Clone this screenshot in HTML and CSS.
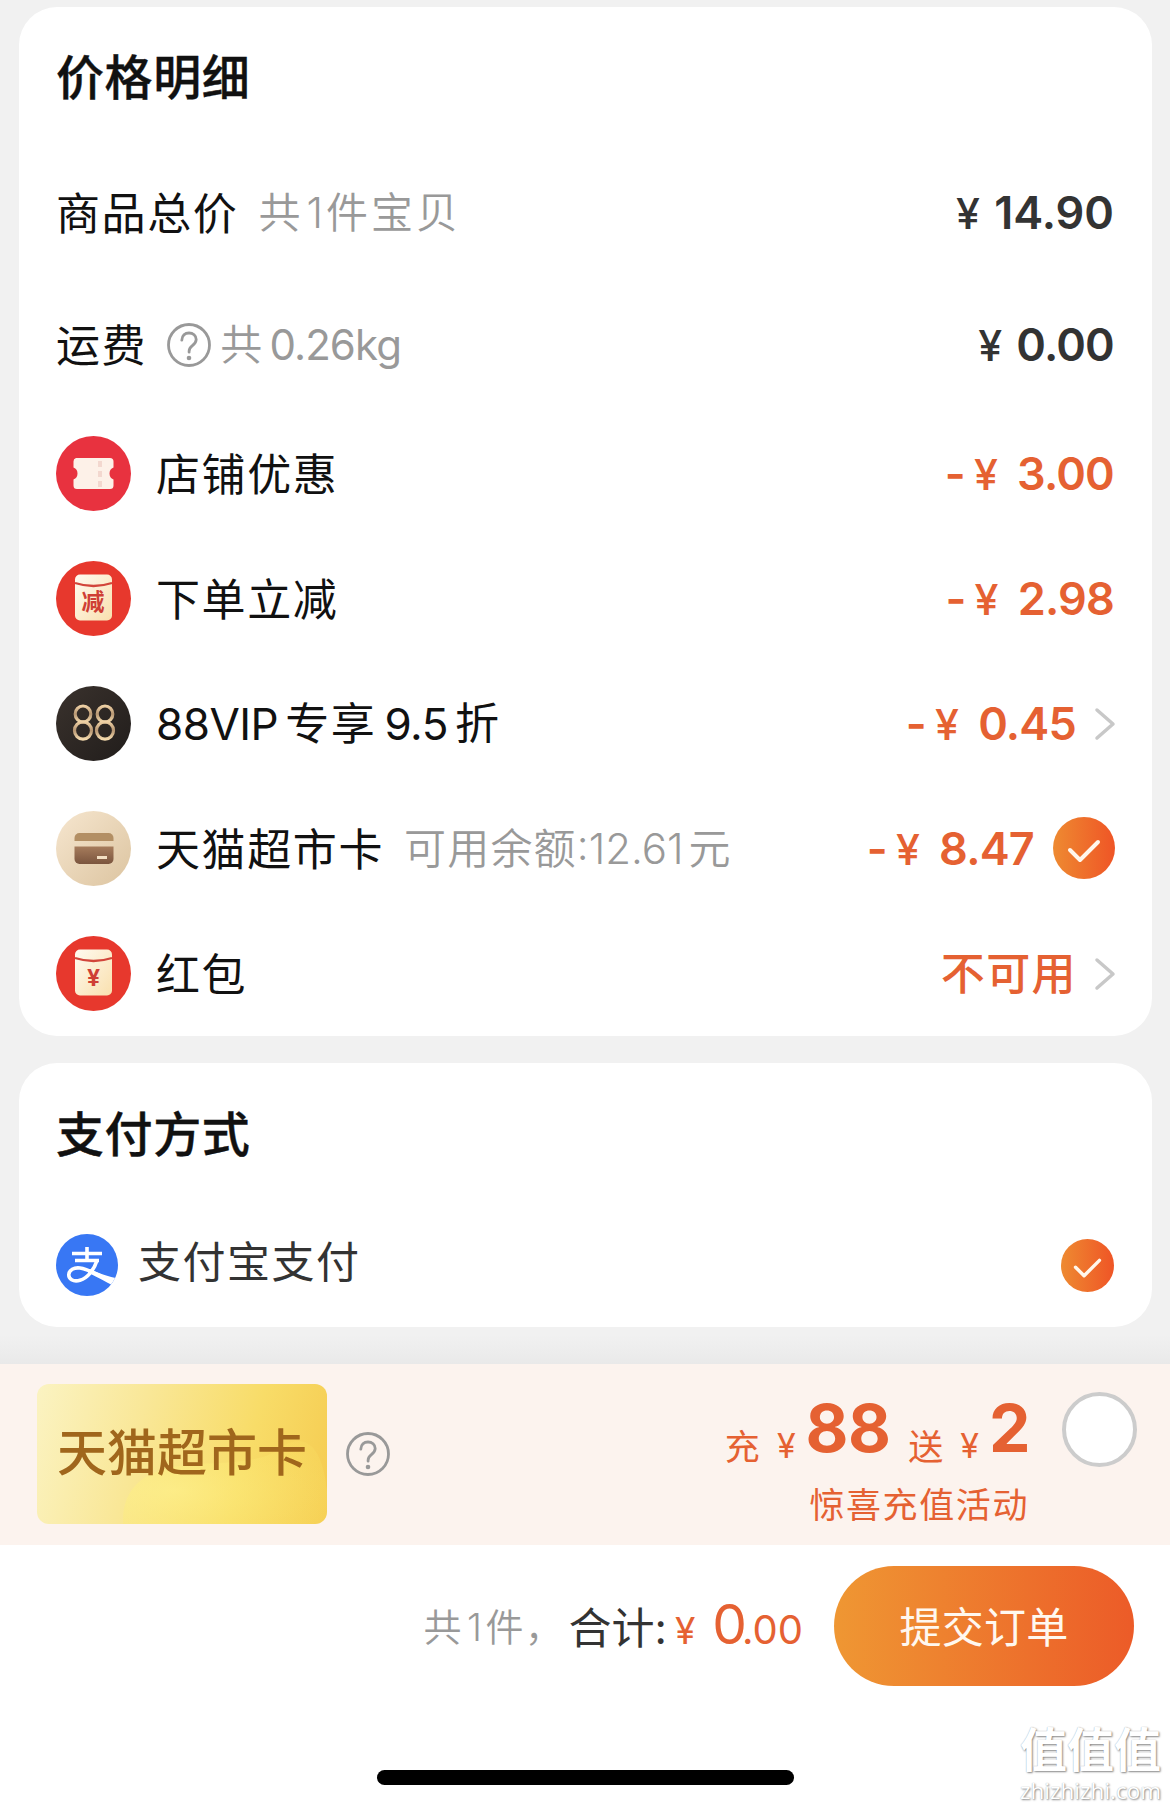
FILE: index.html
```html
<!DOCTYPE html>
<html lang="zh-CN">
<head>
<meta charset="utf-8">
<title>确认订单</title>
<link rel="stylesheet" href="styles.css">
</head>
<body>
<main class="content">
  <section class="card prices">
    <h2 class="title">价格明细</h2>
    <div class="row plain">
      <span class="label">商品总价</span>
      <span class="note wide">共<span class="one">1</span>件宝贝</span>
      <span class="price dark"><span class="yen">¥</span><span class="num goods">14.90</span></span>
    </div>
    <div class="row plain">
      <span class="label">运费</span>
      <svg class="help" viewBox="0 0 44 44"><circle cx="22" cy="22" r="20.5"/><path d="M14.8 17.2C15 12.6 18 10 22 10s7.200 2.700 7.200 6.500c0 3.200-1.900 4.600-4.100 6.400-1.900 1.500-3 2.600-3 5.300v1"/><circle class="dot" cx="22" cy="35" r="2.300"/></svg>
      <span class="note weight">共<span class="kg">0.26kg</span></span>
      <span class="price dark"><span class="yen">¥</span><span class="num">0.00</span></span>
    </div>
    <div class="row">
      <svg class="icon" viewBox="0 0 75 75"><circle cx="37.500" cy="37.500" r="37.500" fill="#e8323f"/><path d="M20 22h34a3.500 3.500 0 0 1 3.500 3.500v6a6.500 6.500 0 0 0 0 12v6A3.500 3.500 0 0 1 54 53H21a3.500 3.500 0 0 1-3.500-3.500v-6a6.500 6.500 0 0 0 0-12v-6A3.500 3.500 0 0 1 20 22z" fill="#fdf1e8"/><path d="M44 25v6M44 35v6M44 45v6" stroke="#f3d8cf" stroke-width="4"/></svg>
      <span class="label">店铺优惠</span>
      <span class="price"><span class="minus">-</span><span class="yen">¥</span><span class="num">3.00</span></span>
    </div>
    <div class="row">
      <svg class="icon" viewBox="0 0 75 75"><defs><linearGradient id="env" x1="0" y1="0" x2="1" y2="1"><stop offset="0" stop-color="#fffaf0"/><stop offset="1" stop-color="#f9e0ae"/></linearGradient></defs><circle cx="37.500" cy="37.500" r="37.500" fill="#e7382d"/><rect x="19" y="13.500" width="37" height="46" rx="5" fill="url(#env)"/><path d="M19 22q18.500 6 37 0" fill="none" stroke="#d2453a" stroke-width="2.300"/><text class="env-text" x="37" y="49">减</text></svg>
      <span class="label">下单立减</span>
      <span class="price"><span class="minus">-</span><span class="yen">¥</span><span class="num">2.98</span></span>
    </div>
    <div class="row">
      <svg class="icon" viewBox="0 0 75 75"><defs><linearGradient id="black" x1="0" y1="0" x2="1" y2="1"><stop offset="0" stop-color="#3a322d"/><stop offset="1" stop-color="#211d1b"/></linearGradient><linearGradient id="gold" x1="0" y1="0" x2="0" y2="1"><stop offset="0" stop-color="#eed0a4"/><stop offset=".5" stop-color="#b79672"/><stop offset="1" stop-color="#f3d9ac"/></linearGradient></defs><circle cx="37.500" cy="37.500" r="37.500" fill="url(#black)"/><g fill="none" stroke="url(#gold)" stroke-width="3.200"><ellipse cx="27" cy="28" rx="7.800" ry="8"/><ellipse cx="27" cy="44.500" rx="8.500" ry="8.700"/><ellipse cx="49" cy="28" rx="7.800" ry="8"/><ellipse cx="49" cy="44.500" rx="8.500" ry="8.700"/></g></svg>
      <span class="label mixed">88VIP<span class="cjk">专享</span>9.5<span class="cjk last">折</span></span>
      <span class="price"><span class="minus">-</span><span class="yen">¥</span><span class="num">0.45</span></span>
      <svg class="chevron" viewBox="0 0 22 34"><path d="M3 3l16 14L3 31"/></svg>
    </div>
    <div class="row">
      <svg class="icon" viewBox="0 0 75 75"><defs><linearGradient id="sand" x1="0" y1="0" x2="1" y2="1"><stop offset="0" stop-color="#f6e6cf"/><stop offset="1" stop-color="#dcc4a0"/></linearGradient><linearGradient id="brown" x1="0" y1="0" x2="0" y2="1"><stop offset="0" stop-color="#a67c5c"/><stop offset="1" stop-color="#7b553e"/></linearGradient></defs><circle cx="37.500" cy="37.500" r="37.500" fill="url(#sand)"/><path d="M18.500 30v-3a5 5 0 0 1 5-5h29a5 5 0 0 1 5 5v3z" fill="#b38f64"/><path d="M18.500 35.500h39V48a5 5 0 0 1-5 5h-29a5 5 0 0 1-5-5z" fill="url(#brown)"/><rect x="41" y="45" width="10" height="3" fill="#f3dfc2"/></svg>
      <span class="label">天猫超市卡</span>
      <span class="note balance">可用余额<span class="amount">:12.61</span>元</span>
      <span class="price"><span class="minus">-</span><span class="yen">¥</span><span class="num">8.47</span></span>
      <svg class="check" viewBox="0 0 62 62"><defs><linearGradient id="orange"><stop offset="0" stop-color="#ee8a31"/><stop offset="1" stop-color="#ef5526"/></linearGradient></defs><circle cx="31" cy="31" r="31" fill="url(#orange)"/><path d="M17 33l10 10 18-18"/></svg>
    </div>
    <div class="row">
      <svg class="icon" viewBox="0 0 75 75"><circle cx="37.500" cy="37.500" r="37.500" fill="#e7382d"/><rect x="19" y="13.500" width="37" height="46" rx="5" fill="url(#env)"/><path d="M19 22q18.500 6 37 0" fill="none" stroke="#d2453a" stroke-width="2.300"/><text class="env-text yen-mark" x="37.500" y="49.500">¥</text></svg>
      <span class="label">红包</span>
      <span class="unavailable">不可用</span>
      <svg class="chevron" viewBox="0 0 22 34"><path d="M3 3l16 14L3 31"/></svg>
    </div>
  </section>

  <section class="card payment">
    <h2 class="title">支付方式</h2>
    <div class="pay-row">
      <svg class="alipay" viewBox="0 0 62 62"><defs><clipPath id="disc"><circle cx="31" cy="31" r="31"/></clipPath></defs><circle cx="31" cy="31" r="31" fill="#3877f4"/><g clip-path="url(#disc)"><g fill="none" stroke="#fff" stroke-width="3.600"><path d="M16 19.500h30M31 13v13M19 26.500h24"/><path d="M41 26.500C38 36 31.500 44 24 46.300c-7 2-11.500-1.500-11.200-5.800C13 36 18 33.200 24 34c6 .8 12 4 20 7.600"/></g><path d="M33 35C43 39.500 52 42.500 62 44.500L57 51.500C50 48 42 43.500 32 38.500z" fill="#fff"/></g></svg>
      <span class="pay-name">支付宝支付</span>
      <svg class="check small" viewBox="0 0 62 62"><circle cx="31" cy="31" r="31" fill="url(#orange)"/><path d="M17 33l10 10 18-18"/></svg>
    </div>
  </section>
</main>

<footer class="footer">
  <div class="promo">
    <div class="gift-card">
      <svg class="gift-shine" viewBox="0 0 290 140" preserveAspectRatio="none"><defs><radialGradient id="shine" cx=".25" cy=".6" r=".8"><stop offset="0" stop-color="#fff38a" stop-opacity=".6"/><stop offset="1" stop-color="#fbe66a" stop-opacity=".2"/></radialGradient></defs><path d="M86 140C85 105 105 83 160 80c50-2 70-4 88-19 22-12 38 4 42 46v33z" fill="url(#shine)"/></svg>
      <span class="gift-name">天猫超市卡</span>
    </div>
    <svg class="help" viewBox="0 0 44 44"><circle cx="22" cy="22" r="20.500"/><path d="M14.800 17.200C15 12.600 18 10 22 10s7.200 2.700 7.200 6.500c0 3.200-1.900 4.600-4.100 6.400-1.900 1.500-3 2.600-3 5.300v1"/><circle class="dot" cx="22" cy="35" r="2.300"/></svg>
    <div class="offer">
      <div class="offer-main"><span class="word">充</span><span class="coin">¥</span><span class="big">88</span><span class="word send">送</span><span class="coin">¥</span><span class="big">2</span></div>
      <div class="offer-sub">惊喜充值活动</div>
    </div>
    <span class="radio"></span>
  </div>
  <div class="submit-bar">
    <span class="count">共<span class="one">1</span>件<span class="comma">，</span></span>
    <span class="total">合计:</span>
    <span class="sum"><span class="sum-yen">¥</span><span class="sum-int">0</span><span class="sum-dec">.00</span></span>
    <button class="submit">提交订单</button>
  </div>
  <div class="home-bar"></div>
  <div class="watermark"><div class="mark-name">值值值</div><div class="mark-site">zhizhizhi.com</div></div>
</footer>
</body>
</html>
```
FILE: styles.css
```css
* { box-sizing: border-box; }
body {
  margin: 0;
  width: 1170px;
  height: 1809px;
  overflow: hidden;
  display: flex;
  flex-direction: column;
  background: #f1f1f1;
  color: #111;
  font-family: Inter, "Noto Sans CJK SC", sans-serif;
}
.content { height: 1364px; padding: 7px 18px 0 19px; background: linear-gradient(#f1f1f1 1335px, #e9e9e9 1364px); }
.card { background: #fff; border-radius: 38px; padding: 0 37px; }
.prices { height: 1029px; padding-top: 35px; }
.payment { height: 264px; margin-top: 27px; padding-top: 36px; }
.title { margin: 0; height: 66px; line-height: 64px; font-size: 48px; font-weight: 500; letter-spacing: .6px; font-family: "Noto Sans CJK SC", sans-serif; -webkit-text-stroke: .4px #111; }
.row { display: flex; align-items: center; height: 125px; white-space: nowrap; }
.row.plain { height: 132px; }
.prices .title { margin-bottom: 39px; }
.icon { width: 75px; height: 75px; margin-right: 25px; flex: none; }
.label { font: 400 44px/60px "Noto Sans CJK SC", sans-serif; letter-spacing: 1.6px; margin-top: -4px; }
.plain .label { margin-top: -4px; }
.label.mixed { font-family: Inter, "Noto Sans CJK SC", sans-serif; letter-spacing: -.5px; margin-top: 0; }
.cjk { letter-spacing: 1.6px; margin: 0 8px 0 7px; }
.cjk.last { margin-right: 0; }
.note { color: #999; font: 350 42px/60px Inter, "Noto Sans CJK SC", sans-serif; letter-spacing: 1.2px; margin-left: 20px; }
.note.wide { letter-spacing: 3px; }
.note.wide .one { margin: 0 0 0 3px; }
.note.weight { margin-left: 9px; }
.kg { letter-spacing: -.9px; margin-left: 6px; font-weight: 400; }
.amount { letter-spacing: 0; margin-right: 5px; }
.help { width: 44px; height: 44px; flex: none; fill: none; stroke: #999; stroke-width: 2.8; stroke-linecap: round; }
.help .dot { fill: #999; stroke: none; }
.row .help { margin-left: 20px; }
.price { display: flex; align-items: baseline; margin-left: auto; padding-right: 1px; color: #e56132; font-size: 45px; line-height: 60px; font-weight: 600; letter-spacing: -.8px; }
.price.dark { color: #333; }
.goods { letter-spacing: 0; }
.yen { font-size: 43px; font-weight: 550; margin-right: 20px; }
.dark .yen { margin-right: 15px; }
.minus { margin-right: 9px; }
.chevron { width: 22px; height: 34px; margin-left: 17px; margin-right: -1px; fill: none; stroke: #c8c8c8; stroke-width: 3.5; stroke-linecap: round; stroke-linejoin: round; }
.check { width: 62px; height: 62px; margin-left: 18px; position: relative; top: -1px; }
.check path { fill: none; stroke: #fff7ec; stroke-width: 4; stroke-linecap: round; stroke-linejoin: round; }
.env-text { font: 700 23px "Noto Sans CJK SC", sans-serif; fill: #cf3f35; text-anchor: middle; }
.env-text.yen-mark { font: 700 23px Inter, sans-serif; }
.unavailable { margin: -5px 0 0 auto; color: #e56132; font: 500 44px/60px "Noto Sans CJK SC", sans-serif; letter-spacing: 1.4px; }
.pay-row { display: flex; align-items: center; height: 62px; margin-top: 69px; }
.alipay { width: 62px; height: 62px; }
.pay-name { margin: -13px 0 0 20px; color: #333; font: 400 43px/60px "Noto Sans CJK SC", sans-serif; letter-spacing: 1.5px; }
.check.small { width: 53px; height: 53px; margin-left: auto; margin-right: 1px; top: 0; }
.footer { position: relative; height: 445px; background: #fff; }
.promo { height: 181px; display: flex; align-items: flex-start; padding: 20px 33px 0 37px; background: #fcf3ee; color: #e56132; }
.gift-card { position: relative; width: 290px; height: 140px; border-radius: 12px; overflow: hidden; display: flex; align-items: center; justify-content: center; background: linear-gradient(105deg, #fbf3c2 0%, #f9e797 35%, #f8dc68 70%, #f5cb50 100%); }
.gift-shine { position: absolute; inset: 0; width: 290px; height: 140px; }
.gift-name { position: relative; color: #a0661c; font: 500 50px/60px "Noto Sans CJK SC", sans-serif; white-space: nowrap; margin-top: -11px; }
.promo .help { margin: 48px 0 0 19px; }
.offer { margin-left: auto; padding-right: 34px; display: flex; flex-direction: column; align-items: flex-end; }
.offer-main { display: flex; align-items: baseline; height: 88px; margin-right: -2px; }
.word { font: 400 35px/50px "Noto Sans CJK SC", sans-serif; position: relative; top: 8px; }
.coin { font-size: 34px; line-height: 50px; margin: 0 10px 0 17px; position: relative; top: 6px; }
.big { font-size: 66px; line-height: 88px; font-weight: 650; letter-spacing: -.6px; }
.send { margin-left: 18px; }
.offer-sub { font: 400 35px/50px "Noto Sans CJK SC", sans-serif; letter-spacing: 1.6px; margin: 6px -1px 0 0; }
.radio { width: 75px; height: 75px; margin-top: 8px; border-radius: 50%; background: #fff; border: 4px solid #ccc; }
.submit-bar { display: flex; align-items: center; justify-content: flex-end; height: 120px; margin-top: 21px; padding-right: 36px; }
.count { color: #999; font: 350 38px/60px Inter, "Noto Sans CJK SC", sans-serif; letter-spacing: 1.5px; white-space: nowrap; padding-top: 2px; }
.count .one { margin: 0 2px 0 4px; }
.comma { margin-right: -6px; }
.total { color: #333; font: 400 43px/60px Inter, "Noto Sans CJK SC", sans-serif; letter-spacing: 0; margin-left: 10px; padding-top: 4px; }
.sum { display: flex; align-items: baseline; color: #e56132; margin: 0 31px 0 8px; line-height: 60px; padding-top: 3px; }
.sum-yen { font-size: 37px; margin-right: 17px; }
.sum-int { font-size: 55px; letter-spacing: -5px; }
.sum-dec { font-size: 40px; }
.submit { width: 300px; height: 120px; padding: 0 0 3px; border: 0; border-radius: 60px; color: #fff8ef; background: linear-gradient(90deg, #ef9733, #ec5b28); font: 400 42px/60px "Noto Sans CJK SC", sans-serif; letter-spacing: .3px; }
.home-bar { width: 417px; height: 15px; margin: 84px auto 0 377px; border-radius: 8px; background: #000; }
.watermark { position: absolute; right: 6px; top: 358px; width: 144px; color: #fff; text-shadow: 1px 1px 2px #888, 0 0 1px #aaa; white-space: nowrap; }
.mark-name { font: 700 47px/56px "Noto Sans CJK SC", sans-serif; height: 60px; margin-top: -3px; }
.mark-site { font: 500 22.500px/24px "Open Sans", sans-serif; }
```
